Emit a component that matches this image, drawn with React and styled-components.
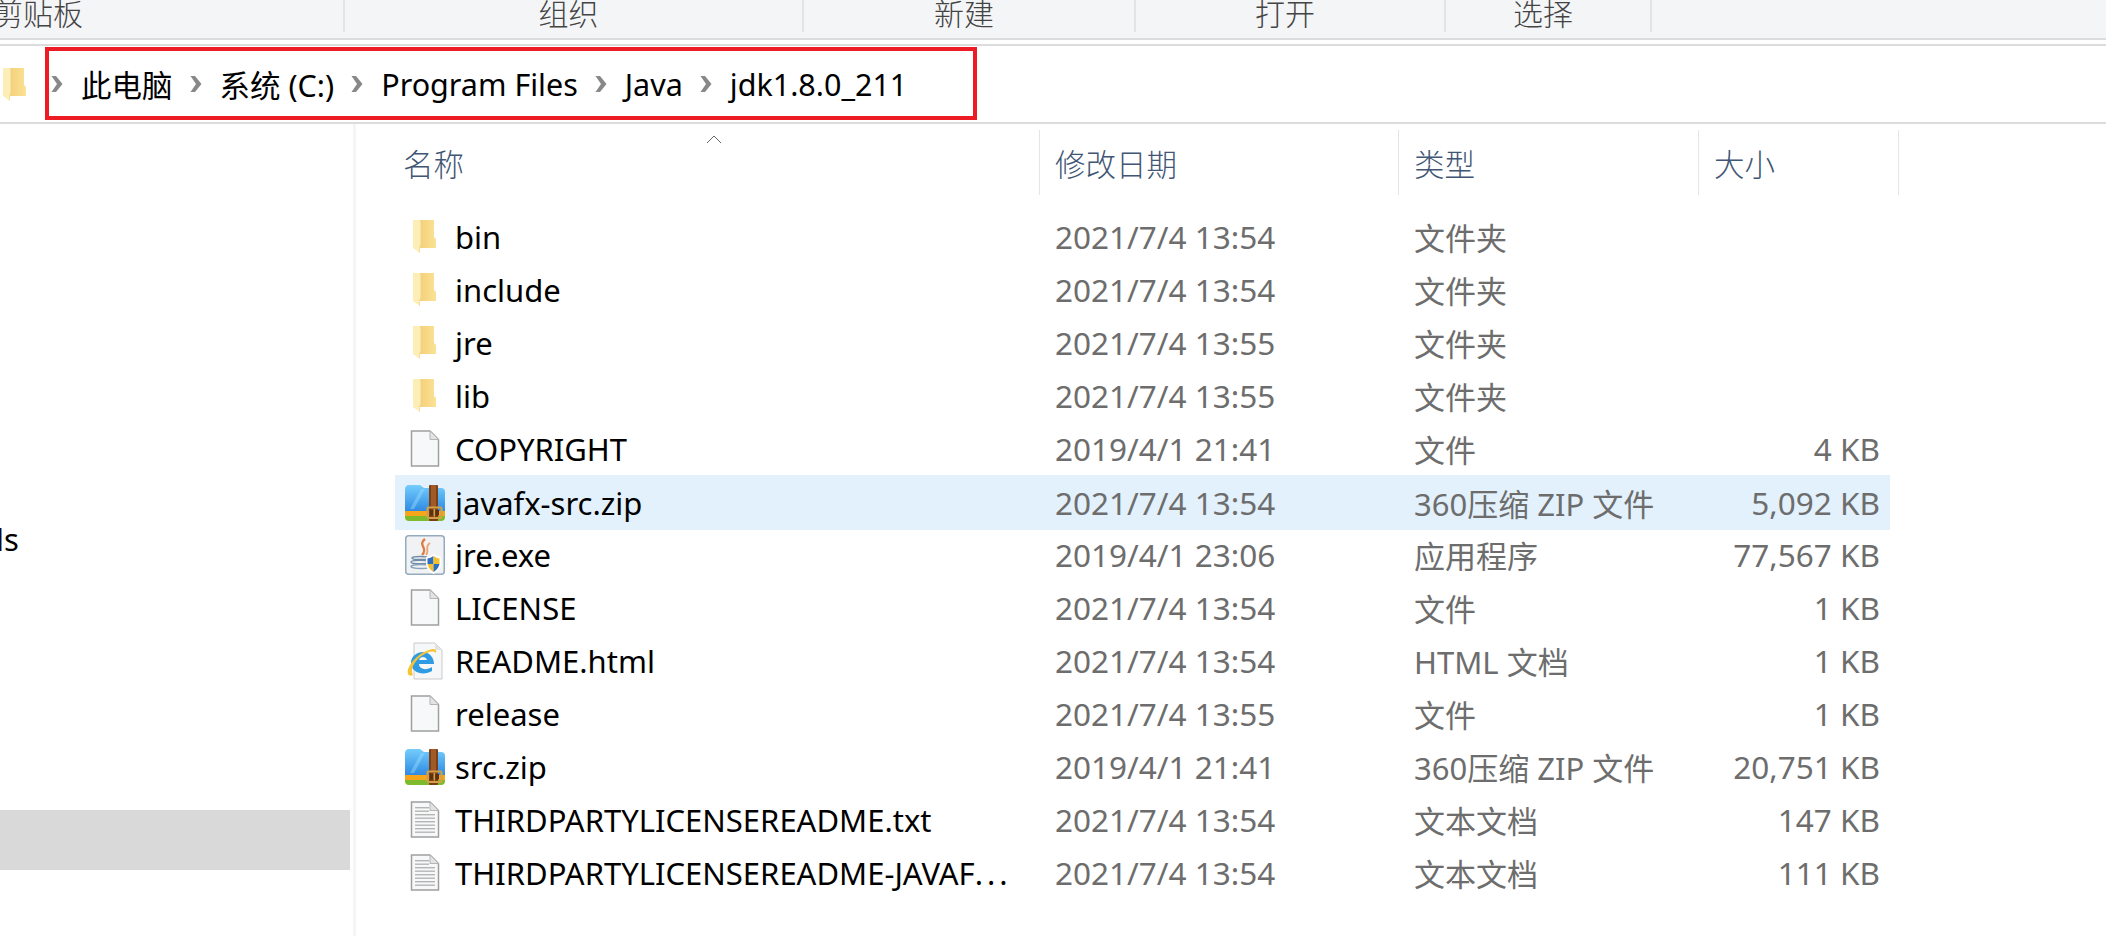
import React from 'react';
import styled, {createGlobalStyle} from 'styled-components';

const GlobalStyle = createGlobalStyle`
    html, body {
        margin: 0;
        padding: 0;
        background: #fff;
        overflow: hidden;
    }
    body {
        font-family: "Noto Sans", "Noto Sans CJK SC", sans-serif;
    }
`;

const Page = styled.div`
    width: 2106px;
    height: 936px;
    display: flex;
    flex-direction: column;
    overflow: hidden;
`;

const Ribbon = styled.div`
    display: flex;
    height: 38px;
    flex-shrink: 0;
    background: #f4f5f7;
    border-bottom: 2px solid #dcdcdc;
    overflow: hidden;
`;

const RibbonGroup = styled.div`
    width: ${props => props.width}px;
    height: 32px;
    flex-shrink: 0;
    display: flex;
    justify-content: ${props => props.start ? 'flex-start' : 'center'};
    border-right: 2px solid #e4e4e4;
    box-sizing: border-box;
`;

const RibbonLabel = styled.span`
    font-family: "Noto Sans CJK SC", sans-serif;
    font-size: 30px;
    font-weight: 300;
    line-height: 24px;
    color: #444;
    margin-left: ${props => props.shift || 0}px;
    white-space: nowrap;
`;

const AddressBar = styled.div`
    height: 76px;
    flex-shrink: 0;
    margin-top: 4px;
    border-top: 2px solid #dcdcdc;
    border-bottom: 2px solid #dcdcdc;
    display: flex;
    align-items: center;
    padding-left: 3px;
`;

const Crumbs = styled.div`
    width: 932px;
    height: 73px;
    margin: 1px 0 2px 17px;
    box-sizing: border-box;
    border: 4px solid #ed1c24;
    display: flex;
    align-items: center;
    padding-left: 2px;
`;

const Crumb = styled.span`
    font-size: 30.5px;
    color: #000;
    margin: 0 17px 0 18px;
    white-space: nowrap;
`;

const Main = styled.div`
    flex: 1;
    display: flex;
    min-height: 0;
`;

const Sidebar = styled.div`
    width: 356px;
    flex-shrink: 0;
    box-sizing: border-box;
    border-right: 3px solid #f5f5f5;
    padding-top: 395px;
    display: flex;
    flex-direction: column;
`;

const SideLabel = styled.div`
    height: 40px;
    font-size: 31px;
    line-height: 40px;
    color: #000;
    margin-left: -4px;
`;

const SideSelected = styled.div`
    height: 60px;
    width: 350px;
    margin-top: 251px;
    background: #d9d9d9;
`;

const Content = styled.div`
    flex: 1;
    position: relative;
    min-width: 0;
`;

const Header = styled.div`
    display: flex;
    height: 65px;
    margin-top: 6px;
    margin-bottom: 15px;
`;

const HeaderCell = styled.div`
    width: ${props => props.width}px;
    flex-shrink: 0;
    box-sizing: border-box;
    padding-left: ${props => props.pad}px;
    display: flex;
    align-items: center;
    font-family: "Noto Sans CJK SC", sans-serif;
    font-size: 30.5px;
    font-weight: 300;
    color: #3f5674;
    border-right: 1px solid #e5e5e5;
`;

const SortCaret = styled.svg`
    position: absolute;
    left: 350px;
    top: 11px;
`;

const Row = styled.div`
    display: grid;
    grid-template-columns: 60px 600px 359px 1fr 180px;
    align-items: center;
    height: ${props => props.selected ? 55 : 53}px;
    margin-bottom: ${props => props.selected ? -2 : 0}px;
    width: 1495px;
    margin-left: 39px;
    box-sizing: border-box;
    padding-right: 10px;
    background: ${props => props.selected ? '#e3f1fc' : 'transparent'};
`;

const IconCell = styled.div`
    display: flex;
    justify-content: center;
    align-items: center;
    height: 100%;
`;

const Name = styled.span`
    font-size: 31px;
    color: #000;
    white-space: nowrap;
`;

const Dots = styled.span`
    letter-spacing: 4px;
`;

const Meta = styled.span`
    font-size: ${props => props.size || 31.5}px;
    color: #6d6d6d;
    white-space: nowrap;
    text-align: ${props => props.right ? 'right' : 'left'};
`;

const FolderIcon = () => (
    <svg width="25" height="33" viewBox="0 0 25 33" style={{flexShrink: 0}}>
        <defs>
            <linearGradient id="folderBody" x1="0" y1="0" x2="1" y2="0">
                <stop offset="0" stopColor="#f4cf78"/>
                <stop offset="1" stopColor="#fbe296"/>
            </linearGradient>
        </defs>
        <path d="M6 0 H21 V17 L23 19 V28 H6 Z" fill="url(#folderBody)"/>
        <path d="M0 0 H7 L8 3 V24 L7 27 V33 L0 28 Z" fill="#fdedb6"/>
        <path d="M7 0 L8 3 V24 L7 27 V33 L6.5 33 V27 L7.5 24 V3 Z" fill="#f0d48e"/>
    </svg>
);

const DocIcon = ({lines}) => (
    <svg width="30" height="38" viewBox="0 0 30 38">
        <path d="M1.5 1 H20 L28.5 9.5 V36 H1.5 Z" fill="#f7f8f9" stroke="#9f9f9f" strokeWidth="1.5"/>
        <path d="M20 1 V9.5 H28.5 Z" fill="#e3e3e3" stroke="#b5b5b5" strokeWidth="1"/>
        {lines && [6, 9.5].map(y => (
            <rect key={y} x="5" y={y} width="14" height="1.4" fill="#b5b5b5"/>
        ))}
        {lines && [13, 16.5, 20, 23.5, 27, 30.5].map(y => (
            <rect key={y} x="5" y={y} width="20" height="1.4" fill="#b5b5b5"/>
        ))}
    </svg>
);

const ZipIcon = () => (
    <svg width="40" height="38" viewBox="0 0 40 38">
        <defs>
            <linearGradient id="zipBlue" x1="0" y1="0" x2="0" y2="1">
                <stop offset="0" stopColor="#74cdfc"/>
                <stop offset="1" stopColor="#2c88e2"/>
            </linearGradient>
        </defs>
        <path d="M0 6 Q0 1 4 1 H15 L19 4 H36 Q40 4 40 8 V28 H0 Z" fill="url(#zipBlue)"/>
        <path d="M5 25 L16 5 H20 L9 25 Z" fill="#9adcfd" opacity="0.45"/>
        <rect x="0" y="27" width="40" height="5.5" fill="#f7a61b"/>
        <path d="M0 32 H40 V33 Q40 37 36 37 H4 Q0 37 0 33 Z" fill="#7dbb2c"/>
        <rect x="24" y="1" width="9" height="36" rx="1" fill="#7c3f18"/>
        <rect x="26" y="1" width="5" height="22" fill="#a15a25"/>
        <rect x="22.5" y="23.5" width="14" height="10.5" rx="1" fill="none" stroke="#d2a046" strokeWidth="2.2"/>
        <rect x="25" y="26" width="9" height="5.5" fill="#5f2f12"/>
        <rect x="28.5" y="25" width="1.6" height="7.5" fill="#d2a046"/>
    </svg>
);

const JavaIcon = () => (
    <svg width="40" height="40" viewBox="0 0 40 40">
        <rect x="0.75" y="0.75" width="38.5" height="38.5" rx="3" fill="#f0f2f4" stroke="#94aabd" strokeWidth="1.5"/>
        <path d="M20 4 C12 10 24 13 17 20" fill="none" stroke="#e07b42" strokeWidth="2.4"/>
        <path d="M25 8 C19 12 25 15 21 20" fill="none" stroke="#eba274" strokeWidth="1.8"/>
        <ellipse cx="15" cy="23" rx="8" ry="1.6" fill="none" stroke="#6f8da9" strokeWidth="1.5"/>
        <ellipse cx="15" cy="27" rx="9" ry="1.8" fill="none" stroke="#6f8da9" strokeWidth="1.5"/>
        <ellipse cx="16" cy="31.5" rx="10" ry="2" fill="none" stroke="#8aa3ba" strokeWidth="1.5"/>
        <path d="M21 22 Q25 22 28.5 19 Q32 22 36 22 V29 Q36 35 28.5 39 Q21 35 21 29 Z" fill="#fff"/>
        <path d="M28.5 21 Q25.5 23 22.5 23.5 V29 H28.5 Z" fill="#2f6fc2"/>
        <path d="M28.5 21 Q31.5 23 34.5 23.5 V29 H28.5 Z" fill="#f4bf2f"/>
        <path d="M22.5 29 H28.5 V37 Q24 34.5 22.5 29 Z" fill="#f4bf2f"/>
        <path d="M34.5 29 H28.5 V37 Q33 34.5 34.5 29 Z" fill="#2f6fc2"/>
    </svg>
);

const IeIcon = () => (
    <svg width="36" height="38" viewBox="0 0 36 38">
        <path d="M7 1 H28 L35 8 V37 H7 Z" fill="#f5f7f8" stroke="#c9c9c9" strokeWidth="1"/>
        <path d="M28 1 V8 H35 Z" fill="#e3e3e3"/>
        <path d="M4 21 C4 14 10 10 16 10 C22 10 27 15 27 22 H12 C12 27 19 29 25 25 V29 C17 34 4 31 4 21 Z M12 18 H20 C19 14 13 14 12 18 Z" fill="#2f9be3" fillRule="evenodd"/>
        <path d="M1 32 C-1 26 9 12 22 8 C27 6 30 7 29 11 C26 8 20 10 13 15 C7 20 3 28 6 33 C4 34 2 34 1 32 Z" fill="#f4c433"/>
    </svg>
);

const ICONS = {
    folder: <FolderIcon/>,
    doc: <DocIcon/>,
    txt: <DocIcon lines/>,
    zip: <ZipIcon/>,
    java: <JavaIcon/>,
    ie: <IeIcon/>,
};

const FILES = [
    {icon: 'folder', name: 'bin', date: '2021/7/4 13:54', type: '文件夹', size: ''},
    {icon: 'folder', name: 'include', date: '2021/7/4 13:54', type: '文件夹', size: ''},
    {icon: 'folder', name: 'jre', date: '2021/7/4 13:55', type: '文件夹', size: ''},
    {icon: 'folder', name: 'lib', date: '2021/7/4 13:55', type: '文件夹', size: ''},
    {icon: 'doc', name: 'COPYRIGHT', date: '2019/4/1 21:41', type: '文件', size: '4 KB'},
    {icon: 'zip', name: 'javafx-src.zip', date: '2021/7/4 13:54', type: '360压缩 ZIP 文件', size: '5,092 KB', selected: true},
    {icon: 'java', name: 'jre.exe', date: '2019/4/1 23:06', type: '应用程序', size: '77,567 KB'},
    {icon: 'doc', name: 'LICENSE', date: '2021/7/4 13:54', type: '文件', size: '1 KB'},
    {icon: 'ie', name: 'README.html', date: '2021/7/4 13:54', type: 'HTML 文档', size: '1 KB'},
    {icon: 'doc', name: 'release', date: '2021/7/4 13:55', type: '文件', size: '1 KB'},
    {icon: 'zip', name: 'src.zip', date: '2019/4/1 21:41', type: '360压缩 ZIP 文件', size: '20,751 KB'},
    {icon: 'txt', name: 'THIRDPARTYLICENSEREADME.txt', date: '2021/7/4 13:54', type: '文本文档', size: '147 KB'},
    {icon: 'txt', name: 'THIRDPARTYLICENSEREADME-JAVAF', cut: true, date: '2021/7/4 13:54', type: '文本文档', size: '111 KB'},
];

const Chevron = () => (
    <svg width="12" height="18" viewBox="0 0 12 18" style={{flexShrink: 0}}>
        <path d="M0.5 1 H5 L11.5 9 L5 17 H0.5 L6 9 Z" fill="#888"/>
    </svg>
);

const CRUMBS = ['此电脑', '系统 (C:)', 'Program Files', 'Java', 'jdk1.8.0_211'];

const App = () => (
    <Page>
        <GlobalStyle/>
        <Ribbon>
            <RibbonGroup width={345} start><RibbonLabel shift={-7}>剪贴板</RibbonLabel></RibbonGroup>
            <RibbonGroup width={459}><RibbonLabel shift={-10}>组织</RibbonLabel></RibbonGroup>
            <RibbonGroup width={332}><RibbonLabel shift={-10}>新建</RibbonLabel></RibbonGroup>
            <RibbonGroup width={310}><RibbonLabel shift={-10}>打开</RibbonLabel></RibbonGroup>
            <RibbonGroup width={206}><RibbonLabel shift={-10}>选择</RibbonLabel></RibbonGroup>
        </Ribbon>
        <AddressBar>
            <FolderIcon/>
            <Crumbs>
                {CRUMBS.map(label => (
                    <React.Fragment key={label}>
                        <Chevron/>
                        <Crumb>{label}</Crumb>
                    </React.Fragment>
                ))}
            </Crumbs>
        </AddressBar>
        <Main>
            <Sidebar>
                <SideLabel>ls</SideLabel>
                <SideSelected/>
            </Sidebar>
            <Content>
                <SortCaret width="16" height="9" viewBox="0 0 16 9">
                    <path d="M1 8 L8 1 L15 8" fill="none" stroke="#666" strokeWidth="1"/>
                </SortCaret>
                <Header>
                    <HeaderCell width={684} pad={47}>名称</HeaderCell>
                    <HeaderCell width={359} pad={15}>修改日期</HeaderCell>
                    <HeaderCell width={300} pad={15}>类型</HeaderCell>
                    <HeaderCell width={200} pad={15}>大小</HeaderCell>
                </Header>
                {FILES.map(file => (
                    <Row key={file.name} selected={file.selected}>
                        <IconCell>{ICONS[file.icon]}</IconCell>
                        <Name>{file.name}{file.cut && <Dots>...</Dots>}</Name>
                        <Meta>{file.date}</Meta>
                        <Meta size={31}>{file.type}</Meta>
                        <Meta right>{file.size}</Meta>
                    </Row>
                ))}
            </Content>
        </Main>
    </Page>
);

export default App;
